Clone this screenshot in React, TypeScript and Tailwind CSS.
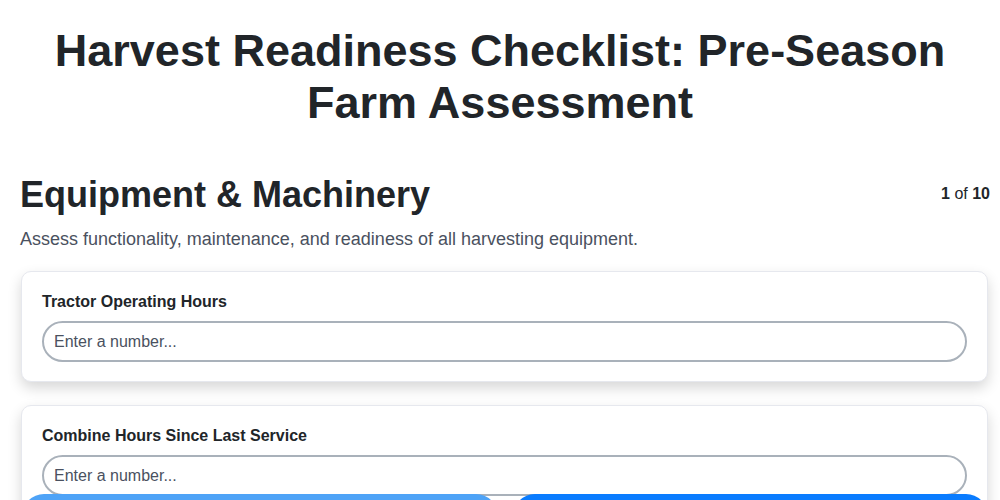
import React, { useState } from 'react';

const questions = [
  { id: 'tractor', label: 'Tractor Operating Hours' },
  { id: 'combine', label: 'Combine Hours Since Last Service' },
];

export default function App() {
  const [values, setValues] = useState<Record<string, string>>({});

  return (
    <div className="min-h-screen bg-white text-[#212529] font-['Liberation_Sans',Arial,sans-serif]">
      <h1 className="pt-[25px] px-10 text-center text-[45px] leading-[52px] font-bold">
        Harvest Readiness Checklist: Pre-Season Farm Assessment
      </h1>

      <div className="pl-5 pr-[10px] pt-[44px]">
        <div className="flex items-start justify-between">
          <h2 className="text-[36px] leading-[44px] font-bold">Equipment &amp; Machinery</h2>
          <div className="pt-[9px] text-[16px]">
            <b>1</b> of <b>10</b>
          </div>
        </div>
        <p className="mt-[9px] text-[18px] text-[#4a5160]">
          Assess functionality, maintenance, and readiness of all harvesting equipment.
        </p>

        <div className="mt-[18px] flex flex-col gap-[23px] pl-[1px] pr-[2px]">
          {questions.map((q) => (
            <div
              key={q.id}
              className="rounded-[10px] border border-[#e6e8ee] bg-white pl-[20px] pr-[20px] pt-[20px] pb-[19px] shadow-[0_6px_14px_rgba(0,0,0,0.16)]"
            >
              <label className="block text-[16px] font-bold leading-[20px]">{q.label}</label>
              <input
                type="number"
                placeholder="Enter a number..."
                value={values[q.id] ?? ''}
                onChange={(e) => setValues({ ...values, [q.id]: e.target.value })}
                className="mt-[9px] block h-[41px] w-full rounded-full border-2 border-[#a9b1ba] px-[10px] text-[16px] text-[#212529] placeholder:text-[#4a5160] outline-none"
              />
            </div>
          ))}
        </div>
      </div>

      <div className="fixed left-[22px] right-[12px] top-[494px] flex gap-[15px]">
        <button className="h-[44px] flex-1 rounded-full bg-[#4ea3f7] text-white font-bold">Previous</button>
        <button className="h-[44px] flex-1 rounded-full bg-[#0a7cff] text-white font-bold">Next</button>
      </div>
    </div>
  );
}
